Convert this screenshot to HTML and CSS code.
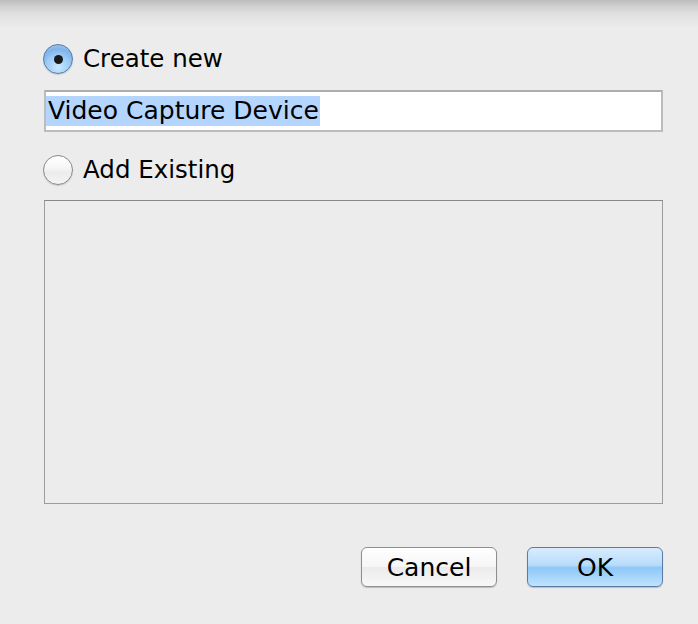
FILE: index.html
```html
<!DOCTYPE html>
<html>
<head>
<meta charset="utf-8">
<link rel="stylesheet" href="styles.css">
</head>
<body>
<div class="dialog">
  <div class="shadow"></div>
  <div class="content">
    <label class="radio-row first">
      <span class="radio checked"><span class="dot"></span></span>
      <span class="label">Create new</span>
    </label>
    <div class="field"><span class="sel">Video Capture Device</span></div>
    <label class="radio-row second">
      <span class="radio"></span>
      <span class="label">Add Existing</span>
    </label>
    <div class="list"></div>
    <div class="buttons">
      <button class="btn">Cancel</button>
      <button class="btn primary">OK</button>
    </div>
  </div>
</div>
</body>
</html>
```
FILE: styles.css
```css
html, body {
  margin: 0;
  padding: 0;
  background: #ececec;
}
.dialog {
  position: relative;
  width: 698px;
  height: 624px;
  overflow: hidden;
  font-family: "DejaVu Sans", "Liberation Sans", sans-serif;
  color: #000;
}
.shadow {
  position: absolute;
  left: 0; right: 0; top: 0;
  height: 28px;
  background: linear-gradient(to bottom, #bcbcbc 0px, #cfcfcf 6px, #e0e0e0 14px, #ececec 28px);
}
.content {
  position: relative;
  padding: 44px 35px 0 43px;
  display: flex;
  flex-direction: column;
}
.radio-row {
  display: flex;
  align-items: center;
  height: 30px;
}
.radio {
  width: 28px;
  height: 28px;
  border-radius: 50%;
  border: 1px solid #8a8a8a;
  background: linear-gradient(to bottom, #ffffff 0%, #f7f7f7 40%, #ececec 60%, #f4f4f4 100%);
  box-shadow: 0 1px 1px rgba(0,0,0,0.15);
  display: flex;
  align-items: center;
  justify-content: center;
  flex: none;
}
.radio.checked {
  border-color: #5a7aa6;
  background: radial-gradient(circle at 50% 80%, #cbe8ff 0%, #9bcbf5 45%, #7fb4ea 70%, #b6d3ef 100%);
}
.dot {
  width: 9px;
  height: 9px;
  border-radius: 50%;
  background: #1a1a1a;
}
.label {
  margin-left: 10px;
  font-size: 24.5px;
  line-height: 30px;
}
.field {
  margin-top: 16px;
  margin-left: 1px;
  width: 615px;
  border: 2px solid #bcbcbc;
  border-top-color: #adadad;
  background: #fff;
  padding: 4px 0 0 0;
  box-sizing: content-box;
  height: 34px;
}
.sel {
  display: inline-block;
  background: #b4d5fe;
  font-size: 25px;
  line-height: 30px;
  padding: 0 1px 0 2px;
}
.radio-row.second {
  margin-top: 23px;
}
.list {
  margin-top: 15px;
  margin-left: 1px;
  width: 617px;
  height: 302px;
  border: 1px solid #9c9c9c;
  border-top-color: #888;
}
.buttons {
  display: flex;
  justify-content: flex-end;
  gap: 30px;
  margin-top: 43px;
  padding-right: 0;
}
.btn {
  width: 136px;
  height: 40px;
  border-radius: 6px;
  border: 1px solid #8e8e8e;
  background: linear-gradient(to bottom, #ffffff 0%, #f5f5f5 50%, #ebebeb 51%, #f8f8f8 100%);
  font-family: "DejaVu Sans", "Liberation Sans", sans-serif;
  font-size: 25px;
  color: #000;
  box-shadow: 0 1px 1px rgba(0,0,0,0.2);
  padding: 0;
}
.btn.primary {
  border-color: #5c7ca6;
  background: linear-gradient(to bottom, #d8ecfd 0%, #b8dcfb 45%, #8ec7f7 52%, #bfe3fd 100%);
}
```
